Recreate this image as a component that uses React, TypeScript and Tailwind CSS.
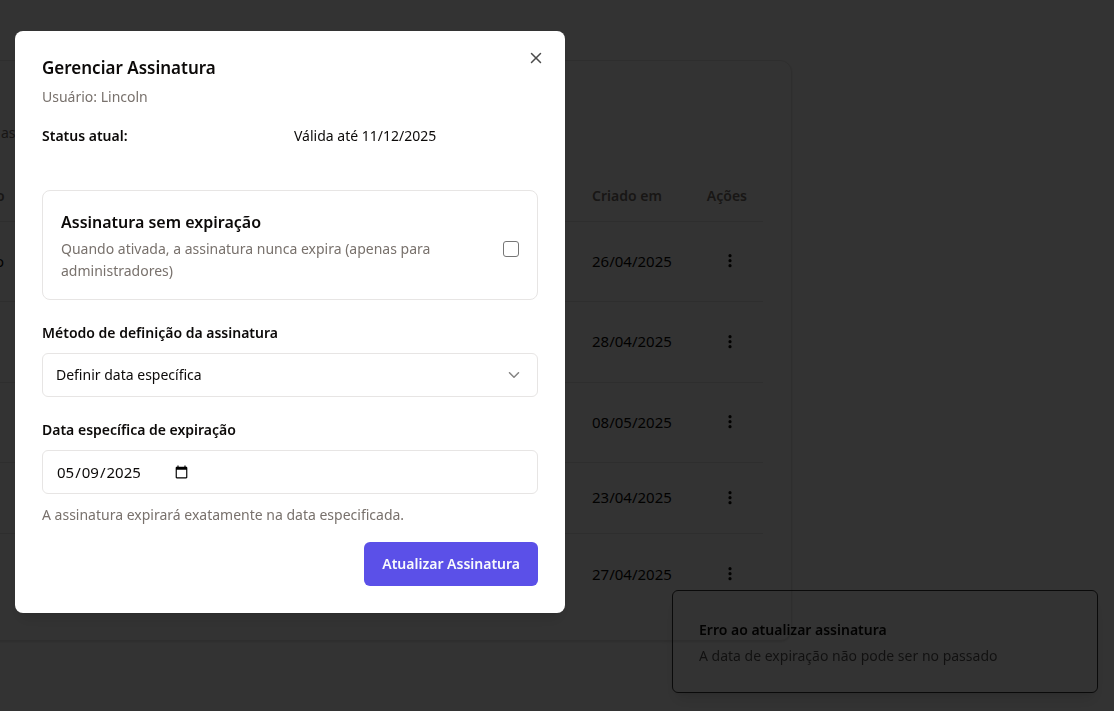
import { ChevronDown, X } from 'lucide-react';

const rows = [
  { name: 'o', created: '26/04/2025', height: 'h-20' },
  { name: '', created: '28/04/2025', height: 'h-[81px]' },
  { name: '', created: '08/05/2025', height: 'h-20' },
  { name: '', created: '23/04/2025', height: 'h-[71px]' },
  { name: '', created: '27/04/2025', height: 'h-[81px]' },
];

function MoreIcon() {
  return (
    <svg width="18" height="18" viewBox="0 0 18 18" fill="currentColor" aria-hidden="true">
      <circle cx="9" cy="3.7" r="1.6" />
      <circle cx="9" cy="8.7" r="1.6" />
      <circle cx="9" cy="13.7" r="1.6" />
    </svg>
  );
}

function UsersCard() {
  return (
    <section className="mr-[322px] -ml-4 rounded-xl border border-[#e7e5e4] bg-white pt-[60px] pr-7 pb-[26px] shadow-sm">
      <p className="pl-4 text-sm leading-6 text-[#78716c]">as</p>
      <table className="mt-[26px] w-full table-fixed border-collapse">
        <thead>
          <tr className="h-[50px] border-b border-[#e7e5e4] text-left text-sm text-[#78716c]">
            <th className="pl-[11px] font-semibold">o</th>
            <th className="w-[114px] px-[18px] font-semibold whitespace-nowrap">Criado em</th>
            <th className="w-[75px] pr-4 text-right font-semibold">Ações</th>
          </tr>
        </thead>
        <tbody>
          {rows.map((row) => (
            <tr key={row.created} className={`${row.height} border-b border-[#e7e5e4] text-[15px] last:border-b-0`}>
              <td className="pl-[10px]">{row.name}</td>
              <td className="px-[18px]">{row.created}</td>
              <td className="pr-4 text-right">
                <button type="button" aria-label="Ações" className="inline-flex h-9 w-[34px] items-center justify-center align-middle">
                  <MoreIcon />
                </button>
              </td>
            </tr>
          ))}
        </tbody>
      </table>
    </section>
  );
}

function Toast() {
  return (
    <div
      role="status"
      className="fixed right-4 bottom-[18px] w-[426px] rounded-md border border-black/80 px-[26px] pt-[27px] pb-6 text-sm shadow-lg"
    >
      <p className="leading-6 font-semibold">Erro ao atualizar assinatura</p>
      <p className="mt-0.5 leading-6 opacity-70">A data de expiração não pode ser no passado</p>
    </div>
  );
}

function SubscriptionDialog() {
  return (
    <div className="fixed inset-0 flex items-start bg-black/80 pt-[31px] pl-[15px]">
      <div
        role="dialog"
        aria-labelledby="dialog-title"
        className="relative w-[550px] rounded-lg bg-white p-[27px] shadow-lg"
      >
        <h2 id="dialog-title" className="text-[17px] leading-5 font-semibold">
          Gerenciar Assinatura
        </h2>
        <p className="mt-2 text-sm leading-[22px] text-[#78716c]">Usuário: Lincoln</p>

        <button type="button" aria-label="Fechar" className="absolute top-[18px] right-5 text-black opacity-70">
          <X size={18} strokeWidth={2} />
        </button>

        <form onSubmit={(event) => event.preventDefault()}>
          <div className="mt-[17px] grid grid-cols-2 gap-2 text-sm leading-[22px]">
            <span className="font-semibold">Status atual:</span>
            <span>Válida até 11/12/2025</span>
          </div>

          <div className="mt-[43px] flex items-center justify-between rounded-lg border border-[#e7e5e4] px-[18px] py-[17px]">
            <div className="w-[390px]">
              <label htmlFor="no-expiry" className="block text-base leading-7 font-semibold">
                Assinatura sem expiração
              </label>
              <p className="mt-0.5 text-sm leading-[22px] text-[#78716c]">
                Quando ativada, a assinatura nunca expira (apenas para administradores)
              </p>
            </div>
            <input
              id="no-expiry"
              type="checkbox"
              className="mt-2 h-4 w-4 appearance-none rounded-[3px] border border-[#767676] bg-white checked:bg-[#4f46e5]"
            />
          </div>

          <label htmlFor="method" className="mt-[22px] block text-sm leading-[22px] font-semibold">
            Método de definição da assinatura
          </label>
          <div className="relative mt-[9px]">
            <select
              id="method"
              className="h-11 w-full appearance-none rounded-md border border-[#e7e5e4] bg-white px-[13px] text-sm"
            >
              <option>Definir data específica</option>
            </select>
            <ChevronDown
              size={18}
              strokeWidth={2}
              className="pointer-events-none absolute top-[13px] right-[15px] opacity-50"
            />
          </div>

          <label htmlFor="expiry" className="mt-[22px] block text-sm leading-[22px] font-semibold">
            Data específica de expiração
          </label>
          <input
            id="expiry"
            type="date"
            defaultValue="2025-05-09"
            className="mt-[9px] flex h-11 w-full rounded-md border border-[#e7e5e4] bg-white px-[13px] py-2 text-[15px]"
          />
          <p className="mt-[10px] text-sm leading-[22px] text-[#78716c]">
            A assinatura expirará exatamente na data especificada.
          </p>

          <div className="mt-4 flex justify-end">
            <button
              type="submit"
              className="h-11 rounded-md bg-[#5b50e8] px-[18px] text-sm font-semibold text-[#f8fafc]"
            >
              Atualizar Assinatura
            </button>
          </div>
        </form>
      </div>
    </div>
  );
}

export default function App() {
  return (
    <div className="min-h-screen overflow-hidden bg-white pt-[60px] font-['Segoe_UI','Noto_Sans',sans-serif] text-[#0c0a09]">
      <UsersCard />
      <Toast />
      <SubscriptionDialog />
    </div>
  );
}
